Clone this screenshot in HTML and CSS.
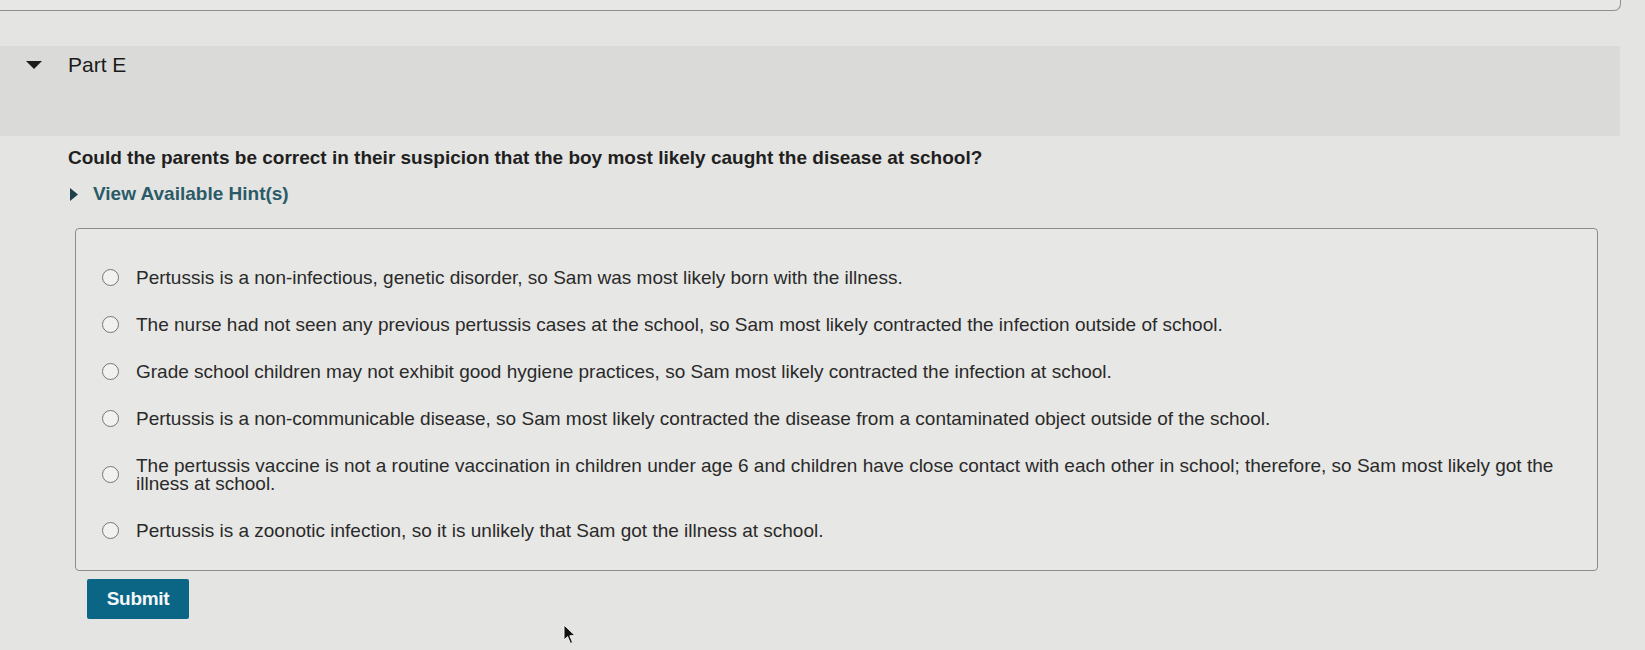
FILE: index.html
```html
<!DOCTYPE html>
<html lang="en">
<head>
<meta charset="utf-8">
<title>Part E</title>
<link rel="stylesheet" href="styles.css">
</head>
<body>
<div class="page">
  <div class="top-panel"></div>

  <div class="part-head">
    <svg class="caret-down" width="16" height="8" viewBox="0 0 16 8" aria-hidden="true"><polygon points="0,0 16,0 8,8" fill="#1c1c1c"/></svg>
    <span class="part-title">Part E</span>
  </div>

  <div class="part-body">
    <p class="question">Could the parents be correct in their suspicion that the boy most likely caught the disease at school?</p>

    <div class="hint">
      <svg class="caret-right" width="8" height="13" viewBox="0 0 8 13" aria-hidden="true"><polygon points="0,0 8,6.5 0,13" fill="#1f3f4a"/></svg>
      <span class="hint-text">View Available Hint(s)</span>
    </div>

    <div class="answers">
      <label class="option"><input type="radio" name="a" class="radio"><span class="opt-text">Pertussis is a non-infectious, genetic disorder, so Sam was most likely born with the illness.</span></label>
      <label class="option"><input type="radio" name="a" class="radio"><span class="opt-text">The nurse had not seen any previous pertussis cases at the school, so Sam most likely contracted the infection outside of school.</span></label>
      <label class="option"><input type="radio" name="a" class="radio"><span class="opt-text">Grade school children may not exhibit good hygiene practices, so Sam most likely contracted the infection at school.</span></label>
      <label class="option"><input type="radio" name="a" class="radio"><span class="opt-text">Pertussis is a non-communicable disease, so Sam most likely contracted the disease from a contaminated object outside of the school.</span></label>
      <label class="option"><input type="radio" name="a" class="radio"><span class="opt-text">The pertussis vaccine is not a routine vaccination in children under age 6 and children have close contact with each other in school; therefore, so Sam most likely got the illness at school.</span></label>
      <label class="option"><input type="radio" name="a" class="radio"><span class="opt-text">Pertussis is a zoonotic infection, so it is unlikely that Sam got the illness at school.</span></label>
    </div>

    <button class="submit" type="button">Submit</button>
  </div>

  <svg class="cursor" width="14" height="21" viewBox="0 0 14 21" aria-hidden="true"><path d="M1 1 L1 16 L4.6 12.6 L7.4 19.4 L9.6 18.4 L6.8 11.8 L12 11.6 Z" fill="#111" stroke="#f2f2f2" stroke-width="1"/></svg>
</div>
</body>
</html>
```

FILE: styles.css
```css
* { box-sizing: border-box; }

html, body {
  margin: 0;
  padding: 0;
  background: #e4e4e2;
}

body {
  font-family: "Liberation Sans", Arial, Helvetica, sans-serif;
  color: #262626;
  font-size: 19px;
}

.page {
  position: relative;
  width: 1645px;
  height: 650px;
  overflow: hidden;
}

.top-panel {
  width: 1621px;
  height: 11px;
  border-right: 1px solid #8f8f8d;
  border-bottom: 1px solid #8f8f8d;
  border-bottom-right-radius: 7px;
  background: #e7e7e5;
}

.part-head {
  margin-top: 35px;
  width: 1620px;
  height: 90px;
  background: #dadad8;
  display: flex;
  align-items: flex-start;
  padding-left: 26px;
  padding-top: 7px;
  gap: 26px;
}

.caret-down {
  margin-top: 8px;
  flex: none;
}

.part-title {
  font-size: 21px;
  line-height: 24px;
  color: #1a1a1a;
}

.part-body {
  padding-left: 68px;
}

.question {
  margin: 11px 0 0;
  font-weight: bold;
  font-size: 19px;
  line-height: 22px;
  color: #1f1f1f;
}

.hint {
  margin-top: 14px;
  display: flex;
  align-items: center;
  height: 22px;
  padding-left: 2px;
  gap: 15px;
}

.hint-text {
  font-weight: bold;
  font-size: 19px;
  line-height: 22px;
  color: #2b5a68;
}

.answers {
  margin-top: 23px;
  margin-left: 7px;
  width: 1523px;
  border: 1px solid #8c8c8a;
  border-radius: 4px;
  background: #e7e7e5;
  padding: 25px 40px 16px 26px;
}

.option {
  display: flex;
  align-items: center;
  padding: 14.5px 0;
  gap: 17px;
  cursor: pointer;
}

.radio {
  appearance: none;
  -webkit-appearance: none;
  margin: 0;
  flex: none;
  width: 17px;
  height: 17px;
  border: 1.5px solid #767676;
  border-radius: 50%;
  background: #f1f1ef;
}

.opt-text {
  line-height: 18px;
  color: #2a2a2a;
}

.submit {
  margin-top: 8px;
  margin-left: 19px;
  width: 102px;
  height: 40px;
  border: none;
  border-radius: 2px;
  background: #0b6686;
  color: #f4f7f8;
  font-family: "Liberation Sans", Arial, Helvetica, sans-serif;
  font-weight: bold;
  font-size: 19px;
  letter-spacing: -0.3px;
  padding: 0;
}

.cursor {
  position: absolute;
  left: 563px;
  top: 624px;
}
```
